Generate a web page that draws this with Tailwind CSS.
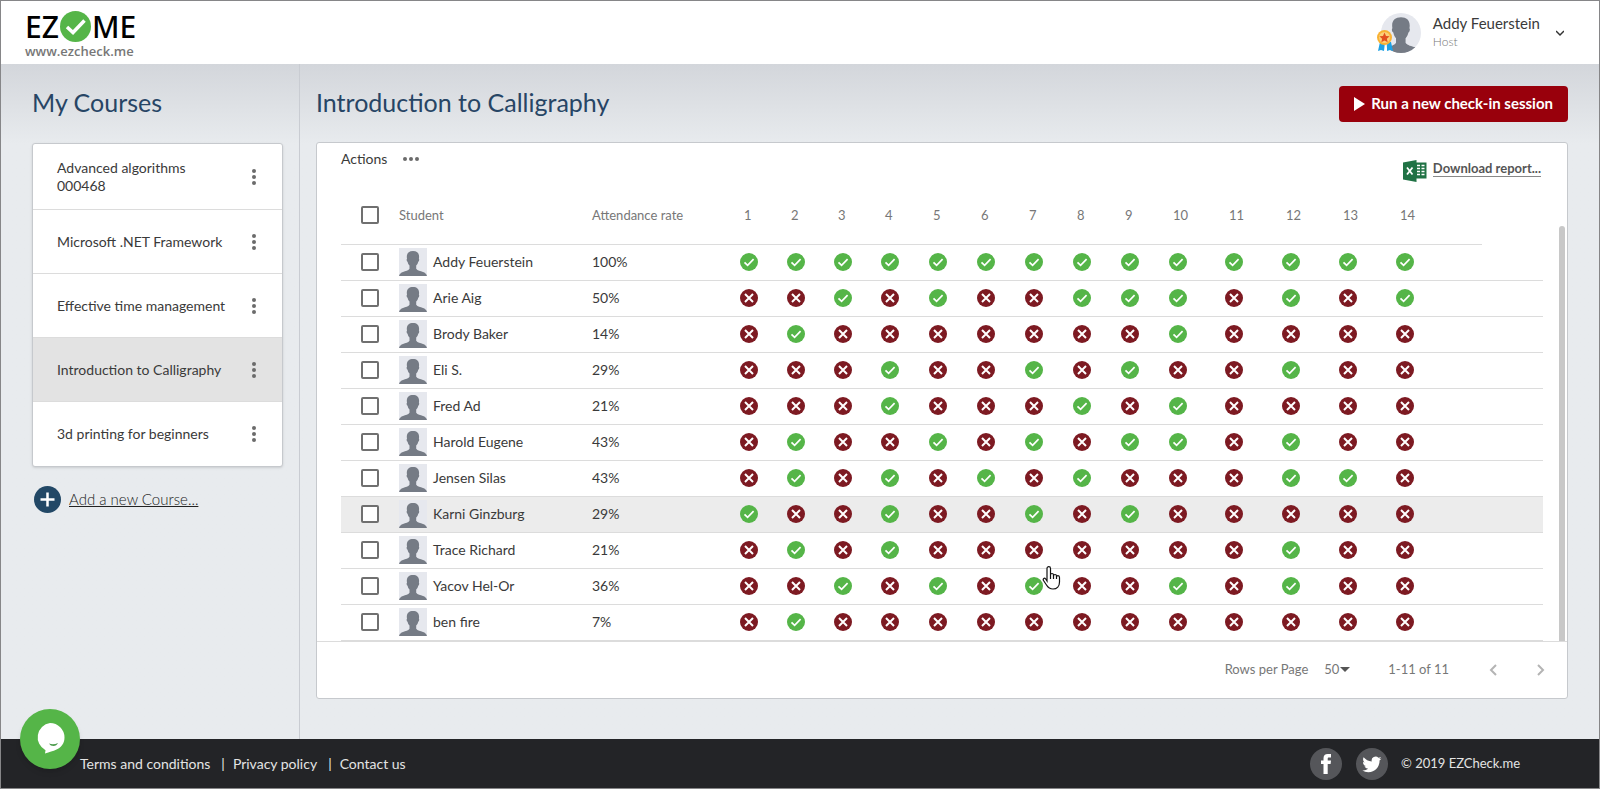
<!DOCTYPE html>
<html lang="en">
<head>
<meta charset="utf-8">
<title>EZCheck.me – Introduction to Calligraphy</title>
<script src="https://cdn.jsdelivr.net/npm/@tailwindcss/browser@4"></script>
</head>
<body class="flex min-h-screen flex-col border border-[#868688] bg-[#e8ebee] font-['Lato','Open_Sans',sans-serif] text-sm text-[#3a3a3a]">

<svg class="hidden" aria-hidden="true">
  <symbol id="person" viewBox="0 0 28 28">
    <rect width="28" height="28" fill="#e6e8ee"/>
    <path fill="#757b85" d="M14 3c3.800 0 6.100 2 6.100 5.700 0 .8-.1 1.500-.2 2 .6.500.3 2.500-.7 3-.4 1.700-1 2.900-2 3.900v3.200c1.300 2 4.200 2.300 6.800 3.200 2 .7 3.400 1.700 4 4H0c.6-2.300 2-3.300 4-4 2.600-.9 5.300-1.200 6.500-3.200v-3.200c-1-1-1.500-2.200-1.900-3.900-1-.5-1.300-2.500-.6-3-.1-.5-.2-1.200-.2-2C7.800 5 10.200 3 14 3z"/>
  </symbol>
  <symbol id="yes" viewBox="0 0 18 18">
    <circle cx="9" cy="9" r="9" fill="#55b548"/>
    <path d="M4.500 9.300l3.100 3.100 6-6.200" fill="none" stroke="#fff" stroke-width="1.700"/>
  </symbol>
  <symbol id="no" viewBox="0 0 18 18">
    <circle cx="9" cy="9" r="9" fill="#7d1a22"/>
    <path d="M5 5l8 8M13 5l-8 8" fill="none" stroke="#fff" stroke-width="2"/>
  </symbol>
  <symbol id="dots" viewBox="0 0 4 16">
    <circle cx="2" cy="2" r="2"/><circle cx="2" cy="8" r="2"/><circle cx="2" cy="14" r="2"/>
  </symbol>
</svg>

<header class="flex h-[63px] items-center justify-between bg-white pr-[35px] pl-6">
  <a href="#" class="flex flex-col pt-1 font-['Noto_Sans','Open_Sans',sans-serif]" aria-label="EZ Check Me home">
    <span class="flex h-8 items-center text-[30px] leading-8 font-medium text-black">EZ<svg class="mx-px size-[31px]" viewBox="0 0 31 31"><circle cx="15.500" cy="15.500" r="15.500" fill="#55b548"/><path d="M7 16l6 5.500L24.500 9.500" fill="none" stroke="#fff" stroke-width="3.500"/></svg>ME</span>
    <span class="font-['Open_Sans'] text-[13px] leading-4 font-semibold text-[#777]">www.ezcheck.me</span>
  </a>
  <button class="flex items-center text-left">
    <svg class="h-10 w-[45px]" viewBox="0 0 45 40">
      <clipPath id="round"><circle cx="25" cy="20" r="20"/></clipPath>
      <g clip-path="url(#round)"><use href="#person" x="5" y="0" width="40" height="40"/></g>
      <path d="M4 29h5l-1 9-3-1-3 1zM11 29h4l2 9-3-1-3 1z" fill="#1ea1e4"/>
      <circle cx="8.500" cy="24.500" r="7.500" fill="#f9b233"/>
      <circle cx="8.500" cy="24.500" r="5.500" fill="#fbd07a"/>
      <path d="M8.500 19.500l1.500 3.400 3.600.4-2.700 2.400.8 3.600-3.200-1.900-3.200 1.900.8-3.600-2.700-2.400 3.600-.4z" fill="#e2501f"/>
    </svg>
    <span class="ml-3 flex flex-col pb-[2px]">
      <span class="text-[15px] leading-5">Addy Feuerstein</span>
      <span class="text-xs leading-[18px] font-light text-[#777]">Host</span>
    </span>
    <svg class="ml-4 size-2" viewBox="0 0 8 8"><path d="M0 2l4 4 4-4" fill="none" stroke="#333" stroke-width="1.500"/></svg>
  </button>
</header>

<main class="flex flex-1 bg-linear-to-b from-[#d3d6db] to-[#e8ebee] to-[80px]">
  <aside class="w-[299px] shrink-0 border-r border-[#c9ccd2] pr-4 pl-[31px]">
    <h1 class="pt-5 text-[25px] leading-9 text-[#274565]">My Courses</h1>
    <ul id="courses" class="mt-[23px] divide-y divide-[#dcdcdc] rounded-[3px] border border-[#c6c9cd] bg-white shadow-sm"></ul>
    <a href="#" class="mt-[19px] flex items-center gap-2 pl-[2px] text-[15px] font-light text-[#222] underline">
      <svg class="size-[27px]" viewBox="0 0 27 27"><circle cx="13.500" cy="13.500" r="13.500" fill="#224866"/><path d="M13.500 6.500v14M6.500 13.500h14" stroke="#fff" stroke-width="2.500"/></svg>
      Add a new Course...
    </a>
  </aside>

  <section class="min-w-0 flex-1 pr-[31px] pl-4">
    <div class="flex items-start justify-between">
      <h2 class="pt-5 text-[25px] leading-9 text-[#274565]">Introduction to Calligraphy</h2>
      <button class="mt-[22px] flex h-9 items-center gap-[6px] rounded bg-[#99000c] px-[15px] text-[15px] font-bold text-white">
        <svg class="h-[14px] w-[11px]" viewBox="0 0 11 14"><path d="M0 0l11 7-11 7z" fill="#fff"/></svg>Run a new check-in session
      </button>
    </div>

    <div class="mt-5 rounded-[3px] border border-[#c6c9cd] bg-white">
      <div class="flex h-9 items-start justify-between pr-[26px] pl-6">
        <button class="mt-[6px] flex items-center gap-4 leading-5">Actions
          <svg class="h-1 w-4" viewBox="0 0 16 4" fill="#6b6b6b"><circle cx="2" cy="2" r="2"/><circle cx="8" cy="2" r="2"/><circle cx="14" cy="2" r="2"/></svg>
        </button>
        <a href="#" class="mt-[17px] flex items-start gap-[6px] text-[13px] leading-5 font-bold text-[#555]">
          <svg class="h-[22px] w-6" viewBox="0 0 24 22"><path d="M13 2.500h10.500v16H13z" fill="#207245"/><path d="M14 5.500h3M18.500 5.500h3M14 8.500h3M18.500 8.500h3M14 11.500h3M18.500 11.500h3M14 14.500h3M18.500 14.500h3" stroke="#fff" stroke-width="1.700"/><path d="M0 2.500L13.500 0v22L0 19.500z" fill="#207245"/><path d="M4 7.500l5.500 7M9.500 7.500L4 14.500" stroke="#fff" stroke-width="1.800"/></svg>
          <span class="border-b border-[#888] leading-4">Download report...</span>
        </a>
      </div>
      <div class="flex items-end justify-between border-b border-[#dcdcdc] pr-[2px] pl-6">
        <table class="min-w-0 flex-1 table-fixed border-collapse text-left">
          <colgroup>
            <col class="w-[58px]"><col class="w-[193px]"><col class="w-[148px]">
            <col class="w-[47px]"><col class="w-[47px]"><col class="w-[47px]">
            <col class="w-12"><col class="w-12"><col class="w-12"><col class="w-12"><col class="w-12"><col class="w-12">
            <col class="w-14"><col class="w-[57px]"><col class="w-[57px]"><col class="w-[57px]"><col class="w-[86px]"><col>
          </colgroup>
          <thead><tr id="head" class="h-[65px] text-[13px] text-[#777]"></tr></thead>
          <tbody id="rows"></tbody>
        </table>
        <div class="ml-4 h-[415px] w-[6px] rounded-t-full bg-[#c8c8c8]"></div>
      </div>
      <div class="flex h-14 items-center justify-end pr-[22px] text-[13px] text-[#777]">
        <label for="perpage">Rows per Page</label>
        <span class="relative ml-4 flex items-center">
          <select id="perpage" class="w-[26px] appearance-none bg-transparent"><option>50</option><option>100</option></select>
          <svg class="pointer-events-none absolute right-0 h-[5px] w-[10px]" viewBox="0 0 10 5"><path d="M0 0h10L5 5z" fill="#555"/></svg>
        </span>
        <span class="ml-[38px]">1-11 of 11</span>
        <button class="ml-10" aria-label="Previous page"><svg class="h-3 w-2" viewBox="0 0 8 12"><path d="M7 1L2 6l5 5" fill="none" stroke="#b4b4b4" stroke-width="2"/></svg></button>
        <button class="ml-10" aria-label="Next page"><svg class="h-3 w-2" viewBox="0 0 8 12"><path d="M1 1l5 5-5 5" fill="none" stroke="#b4b4b4" stroke-width="2"/></svg></button>
      </div>
    </div>
  </section>
</main>

<footer class="flex h-[49px] shrink-0 items-center bg-[#232427] px-[79px] text-[#e4e4e4]">
  <nav class="flex flex-1 items-center gap-2">
    <a href="#">Terms and conditions</a><span class="pl-[3px]">|</span>
    <a href="#">Privacy policy</a><span class="pl-[3px]">|</span>
    <a href="#">Contact us</a>
  </nav>
  <a href="#" aria-label="Facebook"><svg class="size-8" viewBox="0 0 32 32"><circle cx="16" cy="16" r="16" fill="#55565a"/><path d="M13.500 26v-10H11v-3.600h2.500v-2.200C13.500 7.600 15 6 17.800 6H21v3.600h-2c-1 0-1.300.4-1.300 1.300v1.500H21l-.4 3.600h-2.900v10z" fill="#fff"/></svg></a>
  <a href="#" aria-label="Twitter" class="ml-[14px]"><svg class="size-8" viewBox="0 0 32 32"><circle cx="16" cy="16" r="16" fill="#55565a"/><path transform="translate(6.300 6.800) scale(.8)" d="M23.950 4.570a10 10 0 0 1-2.820.77 4.960 4.960 0 0 0 2.160-2.720c-.95.550-2 .95-3.120 1.180a4.920 4.920 0 0 0-8.380 4.480C7.690 8.100 4.070 6.130 1.640 3.160a4.820 4.820 0 0 0-.67 2.480c0 1.710.87 3.210 2.190 4.100a4.900 4.900 0 0 1-2.230-.61v.06a4.920 4.920 0 0 0 3.950 4.830 5 5 0 0 1-2.210.08 4.940 4.940 0 0 0 4.600 3.420A9.870 9.870 0 0 1 0 19.540a13.990 13.990 0 0 0 7.550 2.210c9.050 0 14-7.500 14-13.980 0-.21 0-.42-.02-.63a9.940 9.940 0 0 0 2.460-2.550z" fill="#fff"/></svg></a>
  <span class="ml-[13px] text-[13px]">© 2019 EZCheck.me</span>
</footer>

<button class="absolute bottom-5 left-5 size-[60px] rounded-full bg-[#55b548] shadow-md" aria-label="Open chat">
  <svg class="size-[60px]" viewBox="0 0 60 60"><path d="M30 14a14.500 14.500 0 0 1 14.500 14.500c0 6-3.500 10-8 12-3.500 1.700-7 2.500-11.500 4l.5-3.300A14.500 14.500 0 0 1 30 14z" fill="#fff"/><path d="M29 34.500c3 1.200 6 .9 9-.5-1 2-2.500 3-4.500 3s-3.500-.8-4.500-2.500z" fill="#4a9a4a"/></svg>
</button>

<svg class="pointer-events-none absolute top-[565px] left-[1042px] h-[26px] w-[19px]" viewBox="0 0 19 26" aria-hidden="true"><path d="M5 16V3.500C5 1 8.500 1 8.500 3.500V10c0-2 3-2 3 0v1c0-2 3-2 3 0v1c0-1.800 3-1.800 3 .5V17c0 4-2.500 7-6.500 7-3.500 0-5-1.500-6.500-4L1.500 15.500c-1-2 1-3 2.200-1.500z" fill="#fff" stroke="#111" stroke-width="1.200"/><path d="M8.500 10v4M11.500 10.500V14M14.500 11.500V14" stroke="#111" stroke-width="1.200"/></svg>

<script>
const courses = ['Advanced algorithms<br>000468', 'Microsoft .NET Framework', 'Effective time management', 'Introduction to Calligraphy', '3d printing for beginners'];
document.getElementById('courses').innerHTML = courses.map((c, i) => `
  <li class="flex min-h-16 items-center justify-between pr-[26px] pl-6 leading-[18px] first:min-h-[66px] ${i === 3 ? 'bg-[#e3e3e3]' : ''}">
    <a href="#">${c}</a>
    <button aria-label="Course menu"><svg class="h-4 w-1" fill="#6b6b6b"><use href="#dots"/></svg></button>
  </li>`).join('');

const students = [
  ['Addy Feuerstein', '100%', [1,2,3,4,5,6,7,8,9,10,11,12,13,14]],
  ['Arie Aig', '50%', [3,5,8,9,10,12,14]],
  ['Brody Baker', '14%', [2,10]],
  ['Eli S.', '29%', [4,7,9,12]],
  ['Fred Ad', '21%', [4,8,10]],
  ['Harold Eugene', '43%', [2,5,7,9,10,12]],
  ['Jensen Silas', '43%', [2,4,6,8,12,13]],
  ['Karni Ginzburg', '29%', [1,4,7,9]],
  ['Trace Richard', '21%', [2,4,12]],
  ['Yacov Hel-Or', '36%', [3,5,7,10,12]],
  ['ben fire', '7%', [2]]
];
const sessions = Array.from({length: 14}, (_, i) => i + 1);
const box = label => `<input type="checkbox" aria-label="${label}" class="ml-5 block size-[18px] appearance-none rounded-[2px] border-2 border-[#707070] bg-white">`;
document.getElementById('head').innerHTML =
  `<th class="border-b border-[#dcdcdc] pt-2">${box('Select all')}</th>
   <th class="border-b border-[#dcdcdc] pt-2 font-normal">Student</th>
   <th class="border-b border-[#dcdcdc] pt-2 font-normal">Attendance rate</th>` +
  sessions.map(n => `<th class="border-b border-[#dcdcdc] pt-2 pl-1 font-normal">${n}</th>`).join('') + '<td></td>';
document.getElementById('rows').innerHTML = students.map(([name, rate, present], i) => `
  <tr class="h-9 border-b border-[#dcdcdc] ${i === 7 ? 'bg-[#ececec]' : ''}">
    <td>${box(name)}</td>
    <td><span class="flex items-center gap-[6px]"><svg class="size-7"><use href="#person"/></svg>${name}</span></td>
    <td>${rate}</td>
    ${sessions.map(n => `<td><svg class="size-[18px]" role="img" aria-label="${present.includes(n) ? 'Present' : 'Absent'}"><use href="${present.includes(n) ? '#yes' : '#no'}"/></svg></td>`).join('')}
    <td></td>
  </tr>`).join('');
</script>
</body>
</html>
